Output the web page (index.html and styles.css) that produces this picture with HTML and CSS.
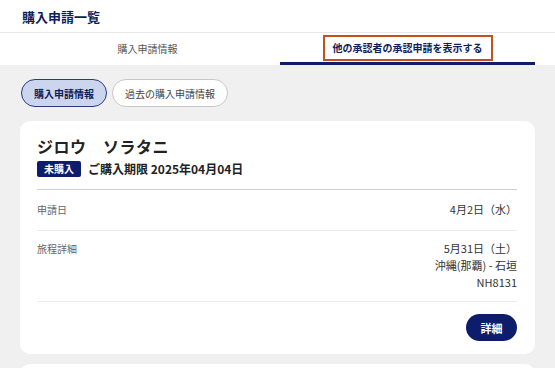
FILE: index.html
```html
<!DOCTYPE html>
<html lang="ja">
<head>
    <meta charset="utf-8">
    <title>購入申請一覧</title>
    <link rel="stylesheet" href="styles.css">
</head>
<body>
    <div class="page-header">購入申請一覧</div>

    <div class="tabs">
        <div class="tab">購入申請情報</div>
        <div class="tab active"><span class="tab-label">他の承認者の承認申請を表示する</span></div>
    </div>

    <div class="main">
        <div class="filters">
            <button class="pill selected">購入申請情報</button>
            <button class="pill">過去の購入申請情報</button>
        </div>

        <div class="card">
            <div class="card-name">ジロウ　ソラタニ</div>
            <div class="card-status">
                <span class="badge">未購入</span>
                <span class="deadline">ご購入期限 2025年04月04日</span>
            </div>
            <div class="row first">
                <div class="row-label">申請日</div>
                <div class="row-value">4月2日（水）</div>
            </div>
            <div class="row">
                <div class="row-label">旅程詳細</div>
                <div class="row-value">
                    5月31日（土）<br>
                    沖縄(那覇) - 石垣<br>
                    NH8131
                </div>
            </div>
            <div class="card-actions">
                <button class="detail-button">詳細</button>
            </div>
        </div>

        <div class="card"></div>
    </div>
</body>
</html>
```

FILE: styles.css
```css
body {
    margin: 0;
    padding: 0;
    font-family: "Noto Sans CJK JP", "Noto Sans", sans-serif;
    background-color: #f0f0f0;
    color: #222;
    overflow: hidden;
}
.page-header {
    background-color: #fff;
    height: 32px;
    line-height: 33px;
    padding-left: 22px;
    font-size: 13px;
    font-weight: bold;
    color: #0e1d5c;
    border-bottom: 1px solid #e6e6e6;
}
.tabs {
    display: flex;
    background-color: #fff;
    padding: 0 20px;
    height: 32px;
}
.tab {
    flex: 1;
    display: flex;
    align-items: center;
    justify-content: center;
    font-size: 10px;
    color: #555;
    border-bottom: 3px solid transparent;
    padding-top: 1px;
}
.tab.active {
    border-bottom-color: #0e1d6b;
    color: #0e1d5c;
    font-weight: bold;
    margin-left: 5px;
}
.tab-label {
    border: 2px solid #c4501c;
    padding: 0 8px;
    height: 22px;
    line-height: 22px;
    margin-top: -1px;
}
.main {
    padding: 14px 20px 0 20px;
}
.filters {
    display: flex;
    gap: 5px;
    margin-left: 1px;
}
.pill {
    font-family: inherit;
    height: 28px;
    padding: 0 12px;
    border-radius: 14px;
    border: 1px solid #c8c8c8;
    background-color: #fff;
    color: #444;
    font-size: 10px;
}
.pill.selected {
    background-color: #ccd5ee;
    border-color: #2a3a80;
    color: #0e1d5c;
    font-weight: bold;
}
.card {
    background-color: #fff;
    border-radius: 10px;
    margin-top: 14px;
    padding: 13px 18px 13px 17px;
}
.card + .card {
    margin-top: 10px;
    height: 40px;
}
.card-name {
    font-size: 16px;
    font-weight: bold;
    line-height: 24px;
    letter-spacing: 0.5px;
}
.card-status {
    display: flex;
    align-items: center;
    gap: 7px;
    margin-top: 2px;
    padding-bottom: 12px;
    border-bottom: 1px solid #cfcfcf;
}
.badge {
    background-color: #0e1d6b;
    color: #fff;
    font-size: 10px;
    font-weight: bold;
    padding: 0 7px;
    height: 16px;
    line-height: 16px;
    border-radius: 2px;
}
.deadline {
    font-size: 12px;
    font-weight: bold;
}
.row {
    display: flex;
    justify-content: space-between;
    padding: 9px 0 10px 0;
    border-bottom: 1px solid #ececec;
    line-height: 17px;
}
.row.first {
    padding: 11px 0 12px 0;
}
.row-label {
    font-size: 10px;
    color: #666;
}
.row-value {
    font-size: 11px;
    color: #333;
    text-align: right;
}
.card-actions {
    display: flex;
    justify-content: flex-end;
    padding-top: 12px;
}
.detail-button {
    font-family: inherit;
    background-color: #0e1d6b;
    color: #fff;
    border: none;
    width: 51px;
    height: 27px;
    border-radius: 14px;
    font-size: 11px;
    font-weight: bold;
}
```
